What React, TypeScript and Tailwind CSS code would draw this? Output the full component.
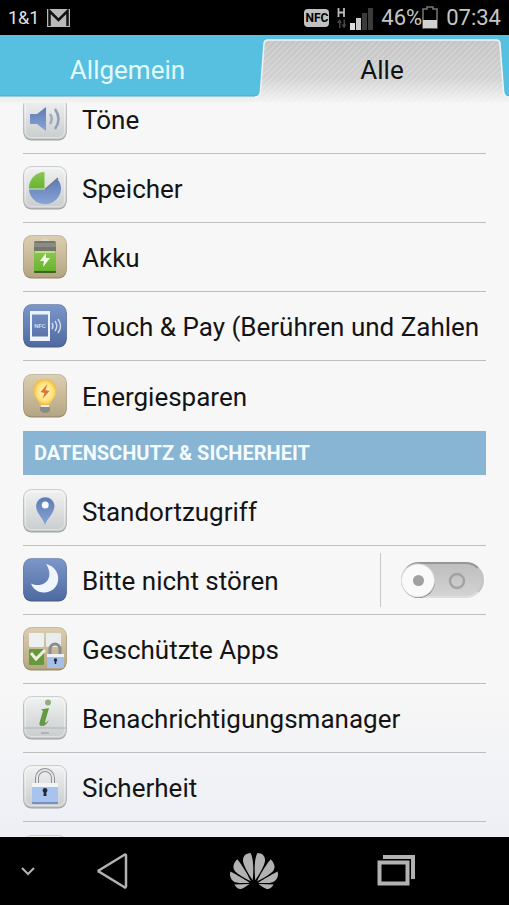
import { useState, type ReactNode } from 'react';
import { SiHuawei } from 'react-icons/si';

type TileTone = 'silver' | 'sand' | 'blue';

const tones: Record<TileTone, [string, string, string]> = {
  silver: ['#f1f2f2', '#c9cccd', '#9da1a4'],
  sand: ['#dccfb2', '#b5a582', '#978a6c'],
  blue: ['#7c97c8', '#4e6aa2', '#4a5f8d'],
};

function Tile({ id, tone, children }: { id: string; tone: TileTone; children?: ReactNode }) {
  const [top, bottom, edge] = tones[tone];
  return (
    <svg viewBox="0 0 44 44" className="size-11 shrink-0" aria-hidden="true">
      <defs>
        <linearGradient id={`tile-${id}`} x1="0" y1="0" x2="0" y2="1">
          <stop offset="0" stopColor={top} />
          <stop offset="1" stopColor={bottom} />
        </linearGradient>
        <linearGradient id={`blue-${id}`} x1="0" y1="0" x2="0" y2="1">
          <stop offset="0" stopColor="#5d7cb4" />
          <stop offset="1" stopColor="#89a4d6" />
        </linearGradient>
        <linearGradient id={`green-${id}`} x1="0" y1="0" x2="0" y2="1">
          <stop offset="0" stopColor="#8bc653" />
          <stop offset="1" stopColor="#68b52f" />
        </linearGradient>
      </defs>
      <rect x="0.5" y="1.5" width="43" height="42" rx="8" fill={edge} />
      <rect x="0.5" y="0.5" width="43" height="42" rx="8" fill={`url(#tile-${id})`} stroke={edge} strokeOpacity="0.45" />
      {tone === 'silver' && (
        <rect x="2.5" y="2.5" width="39" height="38" rx="6" fill="none" stroke="#ffffff" strokeOpacity="0.4" />
      )}
      {children}
    </svg>
  );
}

function Padlock() {
  return (
    <g>
      <path d="M14 20v-7a8 8 0 0 1 16 0v7" fill="none" stroke="#8e9294" strokeWidth="4" />
      <path d="M14 20v-7a8 8 0 0 1 16 0v7" fill="none" stroke="#e4e7e8" strokeWidth="2" />
      <rect x="9" y="19" width="26" height="20" rx="1" fill="#7590c0" />
      <rect x="9" y="19" width="26" height="18" rx="1" fill="#a8c3ee" />
      <rect x="9" y="18" width="26" height="4" fill="#f2f5f7" />
      <circle cx="22" cy="25.500" r="2.400" fill="#222a36" />
      <path d="M21 26h2l.6 5h-3.200z" fill="#222a36" />
    </g>
  );
}

const icons = {
  sound: (
    <Tile id="sound" tone="silver">
      <path d="M7 17h7l9-7v24l-9-7H7z" fill="url(#blue-sound)" />
      <path d="M27 17q3.500 5 0 10" fill="none" stroke="#a0adbd" strokeWidth="2.500" />
      <path d="M32 12q7 10 0 20" fill="none" stroke="#8d9fb9" strokeWidth="2.500" />
    </Tile>
  ),
  storage: (
    <Tile id="storage" tone="silver">
      <path d="M22 23.500 34.500 13A16 15.500 0 1 1 6 23.500z" fill="url(#blue-storage)" />
      <path d="M21.500 22.500H6A15.500 16 0 0 1 21.500 6z" fill="url(#green-storage)" />
      <path d="M22 23.500 35 12" stroke="#707b8a" strokeWidth="1.500" />
    </Tile>
  ),
  battery: (
    <Tile id="battery" tone="sand">
      <ellipse cx="22" cy="6" rx="4" ry="2" fill="#d9d9d2" />
      <rect x="11" y="6" width="22" height="32" rx="2" fill="#77766d" />
      <rect x="11" y="8" width="22" height="4" fill="#8d8c84" />
      <rect x="11" y="16" width="22" height="20" fill="url(#green-battery)" />
      <rect x="12" y="16" width="20" height="2" fill="#b8e37c" />
      <rect x="11" y="36" width="22" height="2" rx="1" fill="#3d641f" />
      <path d="M23 18l-6 8h4l-1 6 7-9h-4z" fill="#f4ffe9" />
    </Tile>
  ),
  nfc: (
    <Tile id="nfc" tone="blue">
      <path d="M8 8h18v28H8z" fill="none" stroke="#eef3fb" strokeWidth="2" />
      <path d="M8 9h18M8 34h18" stroke="#eef3fb" strokeWidth="3" />
      <text x="17" y="24" textAnchor="middle" fontSize="6" className="fill-slate-100 font-['Roboto',sans-serif]">
        NFC
      </text>
      <path d="M29 19q2 3 0 6M32 17q3.500 5 0 10M35 15q5 7 0 14" fill="none" stroke="#d2dcee" strokeWidth="1.400" />
    </Tile>
  ),
  bulb: (
    <Tile id="bulb" tone="sand">
      <defs>
        <radialGradient id="bulb-glow">
          <stop offset="0" stopColor="#fffac0" />
          <stop offset="0.7" stopColor="#ffe27c" />
          <stop offset="1" stopColor="#f0bd44" />
        </radialGradient>
      </defs>
      <path d="M22 5C14 5 10.500 10.500 10.500 16.500 10.500 24 16 25 17 31h10c1-6 6.500-7 6.500-14.500C33.500 10.500 30 5 22 5z" fill="url(#bulb-glow)" />
      <path d="M17 31h10v5q-1 3-5 3t-5-3z" fill="#898b86" />
      <path d="M17.500 32h9" stroke="#eeeeea" strokeWidth="2" />
      <path d="M24.500 10 17.500 18l4 1-2 6 7-8-4-1z" fill="#e1733a" />
    </Tile>
  ),
  location: (
    <Tile id="location" tone="silver">
      <path d="M22 36C20 29 13 24 13 16.500a9.300 9.300 0 0 1 18.500 0C31.500 24 24.500 29 22 36z" fill="url(#blue-location)" />
      <circle cx="22.200" cy="16" r="3.500" fill="#f8fafc" />
    </Tile>
  ),
  moon: (
    <Tile id="moon" tone="blue">
      <path d="M23 6C40 10 39 33 22 34.500 14 35 9.500 30 8 25.500 22 31.500 32 19 23 6z" fill="#eff5ff" />
    </Tile>
  ),
  protectedApps: (
    <Tile id="apps" tone="sand">
      <rect x="6" y="6" width="15" height="14" rx="1" fill="#edf0ef" />
      <rect x="23" y="6" width="15" height="14" rx="1" fill="#e8eceb" />
      <rect x="6" y="22" width="15" height="16" rx="1" fill="#65993a" />
      <path d="m8 26 5 6 9-9" fill="none" stroke="#eff0e4" strokeWidth="3" />
      <path d="M27 27v-5a5 5 0 0 1 10 0v5" fill="none" stroke="#898b8c" strokeWidth="3" />
      <rect x="24" y="27" width="17" height="14" rx="1" fill="#a5bfe9" />
      <rect x="24" y="27" width="17" height="3" fill="#edf2f8" />
      <circle cx="32.500" cy="33" r="1.700" fill="#1f2836" />
      <path d="M32.500 33v4" stroke="#1f2836" strokeWidth="1.500" />
    </Tile>
  ),
  info: (
    <Tile id="info" tone="silver">
      <path d="M1 32h42" stroke="#aeb3b5" strokeWidth="1" />
      <circle cx="25" cy="6.500" r="3" fill="#8fae84" />
      <path d="M18 13.500 26 12 22 26q0 2 4-2-3 6-7 6t-2-5l3-10z" fill="#659a42" />
      <path d="M18 37h8" stroke="#aeb2b4" strokeWidth="2" />
    </Tile>
  ),
  lock: (
    <Tile id="lock" tone="silver">
      <Padlock />
    </Tile>
  ),
  blank: <Tile id="blank" tone="silver" />,
};

function Row({ icon, label, last = false, children }: { icon: ReactNode; label: string; last?: boolean; children?: ReactNode }) {
  return (
    <li className={`flex h-[69px] items-center ${last ? '' : 'border-b border-[#bcbebe]'}`}>
      <button type="button" className="flex h-full min-w-0 flex-1 items-center gap-[15px] text-left">
        {icon}
        <span className="min-w-0 flex-1 pt-0.5 whitespace-nowrap">{label}</span>
      </button>
      {children}
    </li>
  );
}

function DoNotDisturbSwitch() {
  const [on, setOn] = useState(false);
  return (
    <div className="flex h-[54px] items-center border-l border-[#c6c8c8] pr-0.5 pl-5">
      <label className="relative block h-9 w-[83px]">
        <input
          type="checkbox"
          role="switch"
          aria-label="Bitte nicht stören"
          checked={on}
          onChange={() => setOn(!on)}
          className="absolute inset-0 m-0 size-full cursor-pointer appearance-none rounded-full border-2 border-t-[#969696] border-r-[#c4c4c4] border-b-[#dedede] border-l-[#c4c4c4] bg-linear-to-b from-[#bebebe] to-[#d3d3d3]"
        />
        <svg viewBox="0 0 83 36" className="pointer-events-none absolute inset-0 size-full" aria-hidden="true">
          <circle cx="56" cy="19" r="7" fill="none" stroke="#a3a3a3" strokeWidth="2.500" />
          <g transform={on ? 'translate(48 0)' : undefined}>
            <circle cx="17.500" cy="19.500" r="16.500" fill="#777777" />
            <circle cx="17" cy="18.500" r="16.500" fill="#fafafa" stroke="#dddddd" />
            <circle cx="17.500" cy="18.500" r="5.500" fill="#a1a1a1" />
          </g>
        </svg>
      </label>
    </div>
  );
}

function StatusBar() {
  return (
    <header className="flex h-[35px] shrink-0 items-center bg-black px-2 text-[22px] text-[#c6c6c6]">
      <span className="text-lg text-[#e2e2e2]">1&amp;1</span>
      <svg viewBox="0 0 23 18" className="ml-2 h-[18px] w-[23px]" aria-label="Gmail">
        <rect width="23" height="18" fill="#b9b9b9" />
        <path d="M2.500 17V2l9 9 9-9v15" fill="none" stroke="#111" strokeWidth="2.500" />
      </svg>
      <div className="ml-auto flex items-center">
        <span className="rounded-sm bg-[#c1c1c1] px-px text-xs leading-[18px] font-bold text-black">NFC</span>
        <svg viewBox="0 0 36 24" className="ml-2 h-6 w-9" aria-label="Mobilfunksignal">
          <path d="M1.500 2v9M7 2v9M1.500 6.500H7" stroke="#bcbcbc" strokeWidth="1.800" />
          <path d="M2.500 13 0 17h2v5h1.500v-5H5zM7 22.500 4.500 18.500h2V13.500H8v5h1.500z" fill="#454545" />
          <path d="M13 17h5v7h-5z" fill="#dedede" />
          <path d="M19 12h5v12h-5z" fill="#c9c9c9" />
          <path d="M25 7h5v17h-5zM31 2h5v22h-5z" fill="#3b3b3b" />
        </svg>
        <span className="ml-2">46%</span>
        <svg viewBox="0 0 16 23" className="h-[23px] w-4" aria-label="Akku">
          <path d="M1 3h4V1h6v2h4v19H1z" fill="none" stroke="#777" strokeWidth="1.500" />
          <path d="M1 14h14v8H1z" fill="#d2d2d2" />
        </svg>
        <span className="ml-2">07:34</span>
      </div>
    </header>
  );
}

function Tabs() {
  return (
    <nav className="flex h-[68px] shrink-0 bg-[linear-gradient(#57bfe0_0px,#57bfe0_60px,#48aac9_61px,#ececea_62px,#f4f4f2_68px)]">
      <button type="button" className="flex-[255] pt-0.5 text-[#e3fbff]">
        Allgemein
      </button>
      <button type="button" aria-current="page" className="relative flex-[254] pt-0.5 text-[#111]">
        <svg viewBox="0 0 254 68" preserveAspectRatio="none" className="absolute inset-0 size-full" aria-hidden="true">
          <defs>
            <linearGradient id="tab-fill" x1="0" y1="0" x2="0" y2="1">
              <stop offset="0" stopColor="#c4c4c4" />
              <stop offset="0.600" stopColor="#d1d1d1" />
              <stop offset="1" stopColor="#f4f4f4" />
            </linearGradient>
            <pattern id="tab-stripes" width="6" height="6" patternUnits="userSpaceOnUse">
              <path d="M-1 7 7-1M-1 1l2-2M5 7l2-2" stroke="#ffffff" strokeOpacity="0.200" strokeWidth="1.500" />
            </pattern>
          </defs>
          <path d="M0 62q5 0 5.500-6L9 9q0-4 4-4h228q4 0 4 4l3.500 47q.5 6 5.500 6v6H0z" fill="url(#tab-fill)" />
          <path d="M0 62q5 0 5.500-6L9 9q0-4 4-4h228q4 0 4 4l3.500 47q.5 6 5.500 6v6H0z" fill="url(#tab-stripes)" />
          <path d="M0 62q5 0 5.500-6L9 9q0-4 4-4h228q4 0 4 4l3.500 47q.5 6 5.500 6" fill="none" stroke="#f1f4f5" strokeWidth="1.500" />
        </svg>
        <span className="relative">Alle</span>
      </button>
    </nav>
  );
}

function NavigationBar() {
  return (
    <footer className="flex h-[68px] shrink-0 items-center bg-black text-[#b2b2b2]">
      <button type="button" aria-label="Leiste ausblenden" className="flex w-14 justify-center">
        <svg viewBox="0 0 14 10" className="h-2.5 w-3.5">
          <path d="m1 2 6 6 6-6" fill="none" stroke="currentColor" strokeWidth="2" />
        </svg>
      </button>
      <button type="button" aria-label="Zurück" className="flex flex-2 justify-center">
        <svg viewBox="0 0 32 36" className="h-9 w-8">
          <path d="M29 2.500v31a1 1 0 0 1-1.500.8L2.500 19a1 1 0 0 1 0-2L27.500 1.700A1 1 0 0 1 29 2.500z" fill="none" stroke="currentColor" strokeWidth="2.500" />
        </svg>
      </button>
      <button type="button" aria-label="Startseite" className="flex flex-3 justify-center">
        <SiHuawei className="size-12" />
      </button>
      <button type="button" aria-label="Letzte Apps" className="flex flex-2 justify-center">
        <svg viewBox="0 0 38 32" className="h-8 w-[38px]">
          <path d="M2.500 7.500h28v21h-28z" fill="none" stroke="currentColor" strokeWidth="4" />
          <path d="M6 0h32v24h-4V4H6z" fill="currentColor" />
        </svg>
      </button>
      <div className="w-14" />
    </footer>
  );
}

export default function App() {
  return (
    <div className="flex h-screen flex-col bg-[#f7f7f7] font-['Roboto','Noto_Sans',sans-serif] text-[26px] leading-8 text-[#141414]">
      <StatusBar />
      <Tabs />
      <main className="min-h-0 flex-1 overflow-hidden bg-[linear-gradient(#f7f7f7_80%,#eeeff5)] px-[23px]">
        <ul className="-mt-[18px]">
          <Row icon={icons.sound} label="Töne" />
          <Row icon={icons.storage} label="Speicher" />
          <Row icon={icons.battery} label="Akku" />
          <Row icon={icons.nfc} label="Touch & Pay (Berühren und Zahlen" />
          <Row icon={icons.bulb} label="Energiesparen" last />
        </ul>
        <h2 className="mt-px mb-0.5 flex h-11 items-center bg-[#87b5d3] px-[11px] text-xl font-bold text-[#f4fbff]">
          DATENSCHUTZ &amp; SICHERHEIT
        </h2>
        <ul>
          <Row icon={icons.location} label="Standortzugriff" />
          <Row icon={icons.moon} label="Bitte nicht stören">
            <DoNotDisturbSwitch />
          </Row>
          <Row icon={icons.protectedApps} label="Geschützte Apps" />
          <Row icon={icons.info} label="Benachrichtigungsmanager" />
          <Row icon={icons.lock} label="Sicherheit" />
          <Row icon={icons.blank} label="" last />
        </ul>
      </main>
      <NavigationBar />
    </div>
  );
}
